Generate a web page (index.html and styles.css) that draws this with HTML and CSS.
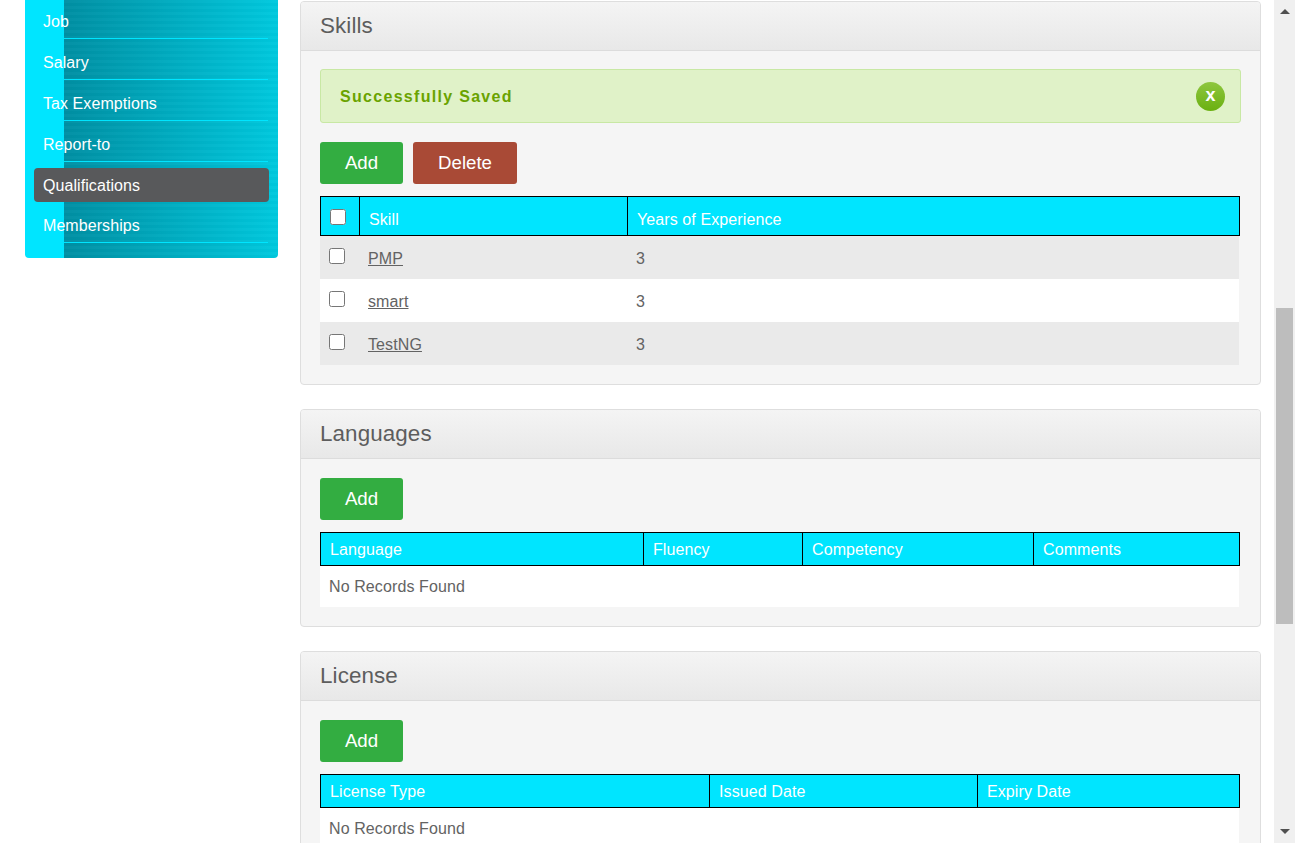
FILE: index.html
```html
<!DOCTYPE html>
<html lang="en">
<head>
    <meta charset="UTF-8">
    <meta name="viewport" content="width=device-width, initial-scale=1.0">
    <title>Qualifications</title>
    <link rel="stylesheet" href="styles.css">
</head>
<body>
<div class="page">

    <nav class="sidebar">
        <ul class="side-menu">
            <li class="side-item"><a href="#">Job</a></li>
            <li class="side-item"><a href="#">Salary</a></li>
            <li class="side-item"><a href="#">Tax Exemptions</a></li>
            <li class="side-item"><a href="#">Report-to</a></li>
            <li class="side-item side-active"><a href="#">Qualifications</a></li>
            <li class="side-item"><a href="#">Memberships</a></li>
        </ul>
    </nav>

    <main class="content">

        <section class="panel">
            <h1 class="panel-head">Skills</h1>
            <div class="panel-body">
                <div class="message">
                    <span class="message-text">Successfully Saved</span>
                    <a class="message-close" href="#">x</a>
                </div>
                <div class="actions">
                    <button class="btn btn-add">Add</button>
                    <button class="btn btn-delete">Delete</button>
                </div>
                <table class="grid skills-grid">
                    <thead>
                        <tr>
                            <th class="col-check"><input type="checkbox"></th>
                            <th class="col-skill">Skill</th>
                            <th>Years of Experience</th>
                        </tr>
                    </thead>
                    <tbody>
                        <tr class="odd">
                            <td class="cell-check"><input type="checkbox"></td>
                            <td><a href="#">PMP</a></td>
                            <td>3</td>
                        </tr>
                        <tr>
                            <td class="cell-check"><input type="checkbox"></td>
                            <td><a href="#">smart</a></td>
                            <td>3</td>
                        </tr>
                        <tr class="odd">
                            <td class="cell-check"><input type="checkbox"></td>
                            <td><a href="#">TestNG</a></td>
                            <td>3</td>
                        </tr>
                    </tbody>
                </table>
            </div>
        </section>

        <section class="panel">
            <h1 class="panel-head">Languages</h1>
            <div class="panel-body">
                <div class="actions">
                    <button class="btn btn-add">Add</button>
                </div>
                <table class="grid">
                    <thead>
                        <tr>
                            <th class="col-language">Language</th>
                            <th class="col-fluency">Fluency</th>
                            <th class="col-competency">Competency</th>
                            <th>Comments</th>
                        </tr>
                    </thead>
                    <tbody>
                        <tr><td class="empty" colspan="4">No Records Found</td></tr>
                    </tbody>
                </table>
            </div>
        </section>

        <section class="panel">
            <h1 class="panel-head">License</h1>
            <div class="panel-body">
                <div class="actions">
                    <button class="btn btn-add">Add</button>
                </div>
                <table class="grid">
                    <thead>
                        <tr>
                            <th class="col-license">License Type</th>
                            <th class="col-issued">Issued Date</th>
                            <th>Expiry Date</th>
                        </tr>
                    </thead>
                    <tbody>
                        <tr><td class="empty" colspan="3">No Records Found</td></tr>
                    </tbody>
                </table>
            </div>
        </section>

    </main>

    <div class="scrollbar">
        <span class="scroll-up"></span>
        <span class="scroll-thumb"></span>
        <span class="scroll-down"></span>
    </div>

</div>
</body>
</html>
```

FILE: styles.css
```css
html, body {
    margin: 0;
    padding: 0;
    height: 100%;
    overflow: hidden;
    background-color: #fff;
}
body {
    font-family: "Liberation Sans", Arial, sans-serif;
    font-size: 16px;
    color: #636363;
}
.page {
    display: flex;
    align-items: flex-start;
    height: 843px;
    overflow: hidden;
}

/* left menu */
.sidebar {
    width: 253px;
    margin-left: 25px;
    padding-bottom: 15px;
    border-radius: 0 0 4px 4px;
    background-color: #00e5ff;
    background-image:
        linear-gradient(#00e5ff, #00e5ff),
        repeating-linear-gradient(rgba(255, 255, 255, 0.02) 0, rgba(255, 255, 255, 0.02) 3px, rgba(0, 0, 0, 0.015) 3px, rgba(0, 0, 0, 0.015) 6px),
        linear-gradient(90deg, #00e5ff 39px, #008fa3 39px, #00c9de 100%);
    background-size: 39px 100%, 100% 100%, 100% 100%;
    background-repeat: no-repeat;
}
.side-menu {
    list-style: none;
    margin: -2px 0 0;
    padding: 0;
}
.side-item {
    height: 41px;
    box-sizing: border-box;
    padding: 14px 0 0 18px;
    line-height: 20px;
    letter-spacing: 0.07px;
    background: linear-gradient(#00e5ff, #00e5ff) no-repeat 39px 40px / 204px 1px;
}
.side-item a {
    color: #fff;
    text-decoration: none;
}
.side-active {
    height: 34px;
    margin: 6px 9px 0 9px;
    padding: 8px 0 0 9px;
    border-radius: 4px;
    background: #58595b;
}

/* main column */
.content {
    width: 961px;
    margin-left: 22px;
    padding-top: 1px;
}
.panel {
    margin-bottom: 24px;
    border: 1px solid #dedede;
    border-radius: 4px;
    background-color: #f5f5f5;
}
.panel-head {
    height: 48px;
    margin: 0;
    padding-left: 19px;
    border-bottom: 1px solid #dcdcdc;
    border-radius: 3px 3px 0 0;
    font-size: 22.4px;
    font-weight: normal;
    line-height: 47px;
    letter-spacing: 0.1px;
    color: #5d5d5d;
    background: linear-gradient(#f4f4f4, #e8e8e8);
}
.panel-body {
    padding: 19px;
}
.message {
    display: flex;
    align-items: center;
    justify-content: space-between;
    box-sizing: border-box;
    height: 54px;
    width: 921px;
    margin: -1px 0 19px;
    padding: 0 15px 0 19px;
    border: 1px solid #c8e8a4;
    border-radius: 3px;
    background-color: #e0f2c8;
    font-weight: bold;
    letter-spacing: 1.3px;
    color: #6aa300;
}
.message-text {
    padding-top: 2px;
}
.message-close {
    width: 29px;
    height: 29px;
    border-radius: 50%;
    background: linear-gradient(#8ec63f, #6ab010);
    color: #fff;
    font-size: 18px;
    font-weight: bold;
    line-height: 27px;
    letter-spacing: 0;
    text-align: center;
    text-decoration: none;
}
.actions {
    display: flex;
    gap: 10px;
    margin-bottom: 12px;
}
.btn {
    height: 42px;
    padding: 0;
    border: 0;
    border-radius: 3px;
    font-family: inherit;
    font-size: 18.67px;
    color: #fff;
}
.btn-add {
    width: 83px;
    background-color: #33ad41;
}
.btn-delete {
    width: 104px;
    background-color: #a94a36;
}

/* tables */
.grid {
    width: 919px;
    border-collapse: separate;
    border-spacing: 0;
    table-layout: fixed;
    letter-spacing: 0.1px;
}
.grid th {
    height: 30px;
    padding: 2px 9px 0;
    border: 1px solid #000;
    border-right: 0;
    background-color: #00e5ff;
    color: #fff;
    font-weight: normal;
    text-align: left;
}
.grid th:last-child {
    box-shadow: 1px 0 0 #000;
}
.grid td {
    height: 43px;
    padding: 2px 9px 0;
    background-color: #fff;
    box-sizing: border-box;
}
.grid .odd td {
    background-color: #eaeaea;
}
.grid td.cell-check {
    padding: 0 9px 4px;
}
.grid a {
    color: #636363;
}
.grid input {
    display: block;
    width: 16px;
    height: 16px;
    margin: 0;
}
.grid .empty {
    height: 41px;
    padding-top: 0;
}
.skills-grid th {
    padding-top: 8px;
}
.skills-grid th.col-check {
    height: 36px;
    padding-top: 2px;
}
.col-check {
    width: 20px;
}
.col-skill {
    width: 249px;
}
.col-language {
    width: 304px;
}
.col-fluency {
    width: 140px;
}
.col-competency {
    width: 212px;
}
.col-license {
    width: 370px;
}
.col-issued {
    width: 249px;
}

/* page scrollbar */
.scrollbar {
    display: flex;
    flex-direction: column;
    align-items: center;
    width: 21px;
    height: 843px;
    margin-left: 13px;
    background-color: #f0f0f0;
}
.scroll-up {
    width: 0;
    height: 0;
    margin-top: 9px;
    border: 5px solid transparent;
    border-top: 0;
    border-bottom-color: #505050;
}
.scroll-thumb {
    width: 17px;
    height: 316px;
    margin-top: 294px;
    background-color: #bdbdbd;
}
.scroll-down {
    width: 0;
    height: 0;
    margin-top: 205px;
    border: 5px solid transparent;
    border-bottom: 0;
    border-top-color: #505050;
}
```
